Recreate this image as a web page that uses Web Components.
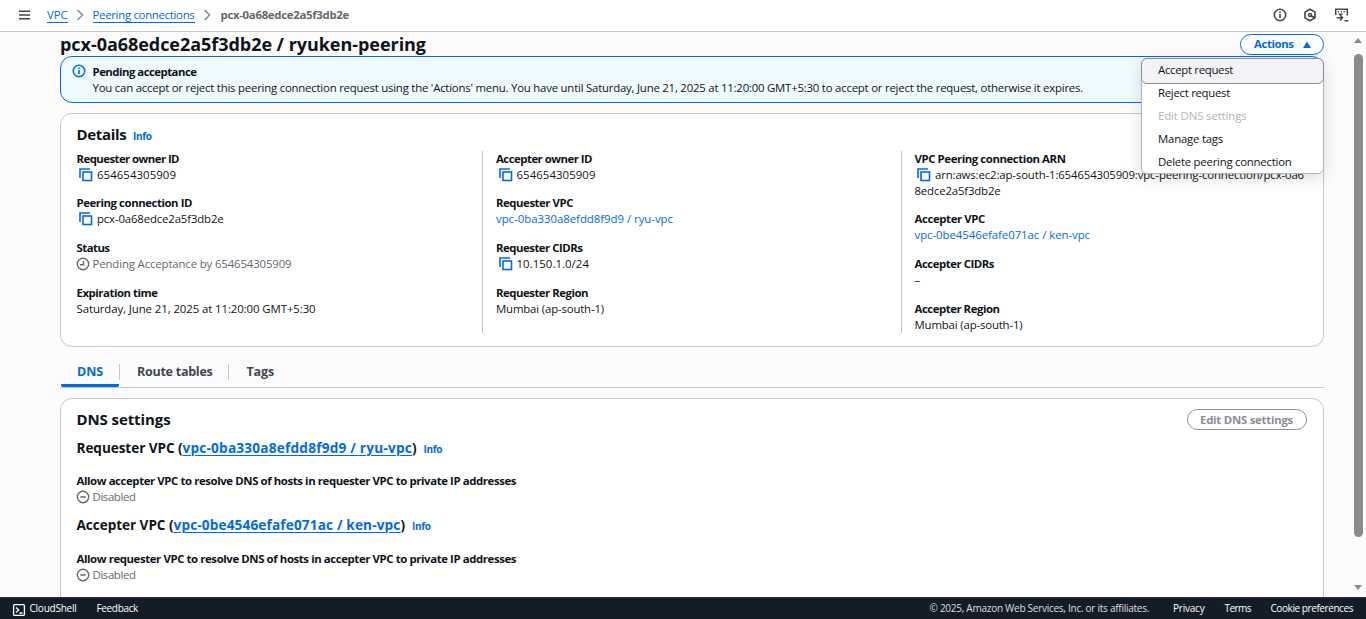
<!DOCTYPE html>
<html lang="en">
<head>
<meta charset="utf-8">
<title>Peering connection</title>
<style>
html,body{margin:0;height:100%;overflow:hidden}
body{font:11.4px/16px "Open Sans","Noto Sans",sans-serif;color:#0f141a;background:#fcfcfd}
</style>
</head>
<body>
<peering-page></peering-page>
<script>
const define = (name, html, setup) => customElements.define(name, class extends HTMLElement {
  constructor() {
    super();
    const t = document.createElement('template');
    t.innerHTML = html;
    this.attachShadow({mode: 'open'}).appendChild(t.content.cloneNode(true));
  }
  connectedCallback() { if (setup) setup(this); }
});

/* One-line text set to a given measure by tracking. */
define('ui-text', `<style>
:host{display:inline-block;white-space:pre;flex:none}
:host([b]){font-weight:700}
:host([link]){color:#006ce0}
:host([u]){text-decoration:underline;text-underline-offset:2px;text-decoration-thickness:1px}
span{display:inline-block;text-decoration:inherit}
</style><span><slot></slot></span>`, el => {
  const w = parseFloat(el.getAttribute('w'));
  const s = el.shadowRoot.querySelector('span');
  if (w) {
    el.style.width = w + 'px';
    s.style.letterSpacing = (w - s.getBoundingClientRect().width) / el.textContent.length + 'px';
  }
});

const icons = {
  menu: '<path d="M1 2.500h12M1 6.500h12M1 10.500h12" stroke-width="1.7"/>',
  chevron: '<path d="M4.500 2l5 5-5 5" stroke-width="1.6"/>',
  info: '<circle cx="7" cy="7" r="5.7" stroke-width="1.6"/><path d="M7 6v4.200M7 3.600v1.500" stroke-width="1.6"/>',
  hex: '<path d="M7 1.200l5 2.900v5.800l-5 2.900-5-2.900V4.100z" stroke-width="1.6" stroke-linejoin="round"/><circle cx="7" cy="7" r="1.5" stroke-width="1.400"/><path d="M7.500 7.500l4 2.200" stroke-width="1.900"/>',
  shell: '<path d="M1.200 7V1.200h11.600v6.300M10 12.800h3.800" stroke-width="1.500"/><path d="M3.300 3.600h1.300M6.200 3.600h1.300M9.100 3.600h1.300" stroke-width="1.200"/><path d="M4.300 6.200h3.700M2.200 9.700h5.300M5.400 7l2.700 2.700-2.700 2.700" stroke-width="1.400"/>',
  copy: '<path d="M1 10V1h10" stroke-width="1.6"/><rect x="4" y="4" width="8.500" height="8.500" stroke-width="1.6"/>',
  clock: '<circle cx="7" cy="7" r="5.700" stroke-width="1.400"/><path d="M7.500 4v3.800H4" stroke-width="1.400"/>',
  minus: '<circle cx="7" cy="7" r="5.700" stroke-width="1.400"/><path d="M4.300 7h5.400" stroke-width="1.500"/>',
  term: '<rect x="1.600" y="1.600" width="10.800" height="10.800" rx="1" stroke-width="1.300"/><path d="M4 4.500L6.700 7 4 9.500M7.500 10h3" stroke-width="1.300"/>',
  up: '<path d="M7 3.500l4 6.500H3z" fill="currentColor" stroke="none"/>'
};
define('ui-icon', `<style>:host{display:inline-block;flex:none;width:14px;height:14px}svg{display:block;width:100%;height:100%}</style>
<svg viewBox="0 0 14 14" fill="none" stroke="currentColor"></svg>`, el => {
  const name = el.getAttribute('name');
  if (name) el.shadowRoot.querySelector('svg').innerHTML = icons[name];
});

define('top-bar', `<style>
:host{display:flex;box-sizing:border-box;height:32px;background:#fff;border-bottom:1px solid #c6c6cd;align-items:center;padding:0 17px 1px 18px;color:#424650}
.cr{color:#8c8c94;margin:0 6px 0 5px}
a{color:#006ce0;border-bottom:1px solid #006ce0;height:15px;display:flex;align-items:center}
.p{color:#656871}.r{margin-left:auto;display:flex;gap:16px}
</style>
<ui-icon name="menu" style="width:13px;height:13px"></ui-icon>
<a style="margin-left:16px"><ui-text w="20.5">VPC</ui-text></a><ui-icon class="cr" name="chevron"></ui-icon>
<a><ui-text w="102">Peering connections</ui-text></a><ui-icon class="cr" style="margin-right:7px" name="chevron"></ui-icon>
<ui-text class="p" b w="128.5">pcx-0a68edce2a5f3db2e</ui-text>
<div class="r"><ui-icon name="info"></ui-icon><ui-icon name="hex"></ui-icon><ui-icon name="shell" style="width:15px;margin-left:1px"></ui-icon></div>`);

define('ui-button', `<style>
:host{display:flex;box-sizing:border-box;height:21px;border:1px solid currentColor;border-radius:11px;align-items:center;padding:0 13px 0 12.500px;font-weight:700;background:#fff}
</style><slot></slot>`);

define('action-menu', `<style>
:host{position:absolute;z-index:5;right:0;top:26px;width:183px;height:116px;box-sizing:border-box;background:#fff;border:1px solid #b4b4bb;border-radius:6px;box-shadow:0 4px 16px rgba(0,7,22,.14)}
div{height:23px;display:flex;align-items:center;padding-left:16px}
.on{margin:-1px -1px 0;height:26px;box-sizing:border-box;background:#f3f3f7;border:1px solid #8c8c94;border-radius:6px;padding-bottom:2px}
.off{color:#b4b4bb}
</style>
<div class="on"><ui-text w="75">Accept request</ui-text></div>
<div style="margin-top:-3px"><ui-text w="72">Reject request</ui-text></div>
<div class="off"><ui-text w="88.5">Edit DNS settings</ui-text></div>
<div><ui-text w="65">Manage tags</ui-text></div>
<div><ui-text w="133.5">Delete peering connection</ui-text></div>`);

define('ui-alert', `<style>
:host{display:flex;box-sizing:border-box;height:47px;border:1px solid #006ce0;border-radius:12px;background:#f0fbff;padding:7px 11.500px}
ui-icon{color:#006ce0;margin:0 6.500px 0 -.500px}div{display:flex;flex-direction:column}
</style><ui-icon name="info"></ui-icon><div><slot></slot></div>`);

define('ui-card', `<style>
:host{display:block;box-sizing:border-box;border:1px solid #c6c6cd;border-radius:12px;background:#fff;padding:0 16px 0 15.500px}
</style><slot></slot>`);

define('kv-pair', `<style>
:host{display:flex;flex-direction:column;margin-bottom:13px;align-items:flex-start}
.v{display:flex;height:16px;align-items:center}
.v ui-icon{margin:0 4px 0 2.500px}
:host(:not([copy])) .v ui-icon{display:none}
</style><slot name="k"></slot><div class="v"><ui-icon name="copy" style="color:#006ce0"></ui-icon><slot></slot></div><slot name="more"></slot>`);

define('ui-status', `<style>:host{display:flex;align-items:center;color:#656871;height:16px}ui-icon{margin:0 2.500px 0 -.500px}</style><ui-icon></ui-icon><slot></slot>`, el => {
  const i = el.shadowRoot.querySelector('ui-icon');
  i.shadowRoot.querySelector('svg').innerHTML = icons[el.getAttribute('name')];
});

define('ui-tabs', `<style>
:host{display:flex;box-sizing:border-box;height:32px;margin-top:9px;border-bottom:1px solid #c6c6cd;font-size:12.500px;font-weight:700;color:#424650}
div{display:flex;align-items:center;box-sizing:border-box;height:31px;padding:0 16px}
.a{height:31px;color:#006ce0;border-bottom:3px solid #006ce0;border-radius:0 0 2px 2px;margin-left:1px;padding-top:3px;padding-right:16px}
i{width:1px;height:16px;background:#c6c6cd;margin-top:8px}
</style><div class="a"><ui-text w="26">DNS</ui-text></div><i></i><div style="padding-left:17px;padding-right:15.500px"><ui-text w="75.5">Route tables</ui-text></div><i></i><div style="padding-left:17.500px"><ui-text w="27.5">Tags</ui-text></div>`);

define('scroll-rail', `<style>
:host{display:flex;flex-direction:column;align-items:center;width:16px;box-sizing:border-box;padding:6px 0 7px}
b{width:9px;height:483px;border-radius:5px;background:#8b8b8b;margin-top:11px}
i{border:4.500px solid transparent;border-top:0;border-bottom:5px solid #8b8b8b}
i.d{border:4.500px solid transparent;border-top:5px solid #8b8b8b;border-bottom:0;margin-top:auto}
</style><i></i><b></b><i class="d"></i>`);

define('foot-bar', `<style>
:host{display:flex;box-sizing:border-box;height:22px;background:#141d26;border-top:1px solid #2b323b;color:#fff;font-size:10px;font-weight:500;align-items:center;padding:0 13px 1px 13px}
</style>
<ui-icon name="term" style="margin:3px 3.500px 0 -1px"></ui-icon><ui-text w="47">CloudShell</ui-text><ui-text style="margin-left:20px" w="41.5">Feedback</ui-text>
<ui-text style="margin-left:auto;color:#dedee3" w="219.5">© 2025, Amazon Web Services, Inc. or its affiliates.</ui-text>
<ui-text style="margin-left:24px" w="31.5">Privacy</ui-text><ui-text style="margin-left:20px" w="26.5">Terms</ui-text><ui-text style="margin-left:19.500px" w="82.5">Cookie preferences</ui-text>`);

define('peering-page', `<style>
:host{display:flex;flex-direction:column;height:619px}
.mid{display:flex;flex:1;min-height:0}
main{flex:1;min-width:0;padding:0 26px 0 60px;overflow:hidden}
.head{display:flex;justify-content:space-between;position:relative;height:24px;font-size:18px}
.head>ui-text{line-height:25px}
.head ui-button,.head action-menu{font-size:11.400px;line-height:16px}
.head ui-button{margin-top:2px;color:#006ce0;width:84px}
.head ui-button ui-text{margin:-2px 0 0 .500px}
.info{font-size:10px;color:#006ce0;font-weight:700;margin-left:6.500px}
.h{display:flex;align-items:baseline;font-size:15px;line-height:20px;font-weight:700}
.h3{font-size:13.600px;line-height:18px}
.details{height:234px;margin-top:10px;padding-top:10px}
.cols{display:flex;margin-top:5px}
.c{flex:none;width:405.500px;height:182px;box-sizing:border-box}
.c+.c{border-left:1px solid #c6c6cd;padding-left:13px;width:418.500px}
.c kv-pair:first-child{margin-bottom:12px}
.dns{margin-top:10px;height:240px;padding-top:10px}
.top{display:flex;justify-content:space-between}
</style>
<top-bar></top-bar>
<div class="mid"><main>
<div class="head"><ui-text b w="366">pcx-0a68edce2a5f3db2e / ryuken-peering</ui-text>
<ui-button><ui-text w="39.5">Actions</ui-text><ui-icon name="up" style="margin-left:6px"></ui-icon></ui-button><action-menu></action-menu></div>
<ui-alert><ui-text b w="104">Pending acceptance</ui-text><ui-text w="990.5">You can accept or reject this peering connection request using the 'Actions' menu. You have until Saturday, June 21, 2025 at 11:20:00 GMT+5:30 to accept or reject the request, otherwise it expires.</ui-text></ui-alert>
<ui-card class="details"><div class="h"><ui-text w="50">Details</ui-text><ui-text class="info" w="18.5">Info</ui-text></div>
<div class="cols">
<div class="c">
<kv-pair copy><ui-text slot="k" b w="102.5">Requester owner ID</ui-text><ui-text w="79">654654305909</ui-text></kv-pair>
<kv-pair copy><ui-text slot="k" b w="115.5">Peering connection ID</ui-text><ui-text w="126.5">pcx-0a68edce2a5f3db2e</ui-text></kv-pair>
<kv-pair><ui-text slot="k" b w="33">Status</ui-text><ui-status name="clock"><ui-text w="199">Pending Acceptance by 654654305909</ui-text></ui-status></kv-pair>
<kv-pair><ui-text slot="k" b w="81">Expiration time</ui-text><ui-text w="239">Saturday, June 21, 2025 at 11:20:00 GMT+5:30</ui-text></kv-pair>
</div>
<div class="c">
<kv-pair copy><ui-text slot="k" b w="96">Accepter owner ID</ui-text><ui-text w="79">654654305909</ui-text></kv-pair>
<kv-pair><ui-text slot="k" b w="77">Requester VPC</ui-text><ui-text link w="177">vpc-0ba330a8efdd8f9d9 / ryu-vpc</ui-text></kv-pair>
<kv-pair copy><ui-text slot="k" b w="86.5">Requester CIDRs</ui-text><ui-text w="72.5">10.150.1.0/24</ui-text></kv-pair>
<kv-pair><ui-text slot="k" b w="92">Requester Region</ui-text><ui-text w="108">Mumbai (ap-south-1)</ui-text></kv-pair>
</div>
<div class="c">
<kv-pair copy><ui-text slot="k" b w="151">VPC Peering connection ARN</ui-text><ui-text w="369">arn:aws:ec2:ap-south-1:654654305909:vpc-peering-connection/pcx-0a6</ui-text><ui-text slot="more" w="86">8edce2a5f3db2e</ui-text></kv-pair>
<kv-pair><ui-text slot="k" b w="70.5">Accepter VPC</ui-text><ui-text link w="175.5">vpc-0be4546efafe071ac / ken-vpc</ui-text></kv-pair>
<kv-pair><ui-text slot="k" b w="79.5">Accepter CIDRs</ui-text><ui-text>–</ui-text></kv-pair>
<kv-pair><ui-text slot="k" b w="85">Accepter Region</ui-text><ui-text w="108">Mumbai (ap-south-1)</ui-text></kv-pair>
</div>
</div></ui-card>
<ui-tabs></ui-tabs>
<ui-card class="dns">
<div class="top"><div class="h"><ui-text w="94">DNS settings</ui-text></div><ui-button style="color:#8c8c94"><ui-text w="93">Edit DNS settings</ui-text></ui-button></div>
<div class="h h3" style="margin-top:9px"><ui-text w="106">Requester VPC (</ui-text><ui-text link u w="229.5">vpc-0ba330a8efdd8f9d9 / ryu-vpc</ui-text><ui-text w="5">)</ui-text><ui-text class="info" w="18.5">Info</ui-text></div>
<ui-text b w="439.5" style="margin-top:15px">Allow accepter VPC to resolve DNS of hosts in requester VPC to private IP addresses</ui-text>
<ui-status name="minus"><ui-text w="43">Disabled</ui-text></ui-status>
<div class="h h3" style="margin-top:11px"><ui-text w="97">Accepter VPC (</ui-text><ui-text link u w="227">vpc-0be4546efafe071ac / ken-vpc</ui-text><ui-text w="5">)</ui-text><ui-text class="info" w="18.5">Info</ui-text></div>
<ui-text b w="439.5" style="margin-top:16px">Allow requester VPC to resolve DNS of hosts in accepter VPC to private IP addresses</ui-text>
<ui-status name="minus"><ui-text w="43">Disabled</ui-text></ui-status>
</ui-card>
</main><scroll-rail></scroll-rail></div>
<foot-bar></foot-bar>`);
</script>
</body>
</html>
